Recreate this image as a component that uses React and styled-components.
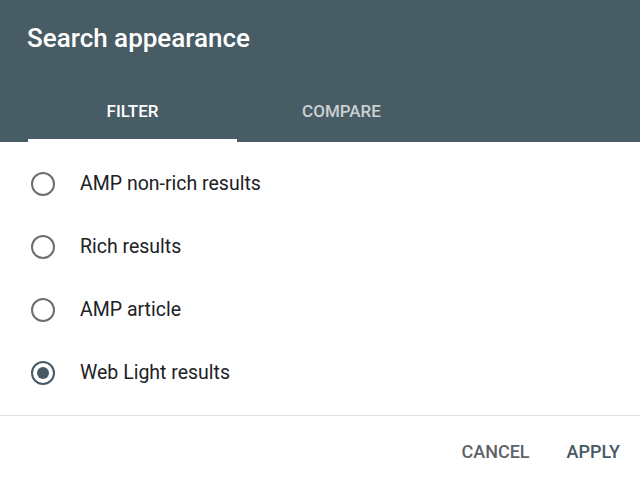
import React, { useState } from "react";
import styled, { createGlobalStyle } from "styled-components";

const Global = createGlobalStyle`
  html, body { margin: 0; padding: 0; background: #fff; }
  body { font-family: Roboto, "Noto Sans", Arial, sans-serif; }
  * { box-sizing: border-box; }
`;

const Dialog = styled.div`
  width: 640px;
  height: 477px;
  display: flex;
  flex-direction: column;
  background: #fff;
  overflow: hidden;
`;

const Header = styled.div`
  background: #485c65;
  height: 142px;
  display: flex;
  flex-direction: column;
  justify-content: space-between;
`;

const Title = styled.h1`
  margin: 0;
  padding: 23px 0 0 27px;
  font-size: 26px;
  font-weight: 500;
  color: #fff;
  line-height: 30px;
`;

const Tabs = styled.div`
  display: flex;
  padding-left: 28px;
`;

const Tab = styled.button`
  width: 209px;
  height: 64px;
  background: none;
  border: none;
  border-bottom: 3px solid ${(p) => (p.$active ? "#fff" : "transparent")};
  color: ${(p) => (p.$active ? "#fff" : "rgba(255,255,255,0.72)")};
  font-family: inherit;
  font-size: 17px;
  font-weight: 500;
  padding: 4px 0 0;
  cursor: pointer;
`;

const List = styled.div`
  padding: 10px 0 11px;
  border-bottom: 1px solid #e0e0e0;
`;

const Row = styled.label`
  height: 63px;
  display: flex;
  align-items: center;
  gap: 25px;
  padding-left: 31px;
  cursor: pointer;
`;

const Radio = styled.span`
  width: 24px;
  height: 24px;
  border-radius: 50%;
  border: 2px solid ${(p) => (p.$checked ? "#455a64" : "#6e6e6e")};
  display: flex;
  align-items: center;
  justify-content: center;
  &::after {
    content: "";
    width: 12px;
    height: 12px;
    border-radius: 50%;
    background: #455a64;
    display: ${(p) => (p.$checked ? "block" : "none")};
  }
`;

const Label = styled.span`
  font-size: 19.5px;
  color: #202124;
`;

const Footer = styled.div`
  flex: 1;
  display: flex;
  justify-content: flex-end;
  align-items: center;
  gap: 37px;
  padding: 9px 20px 0 0;
`;

const TextButton = styled.button`
  background: none;
  border: none;
  padding: 0;
  font-family: inherit;
  font-size: 18px;
  font-weight: 500;
  color: ${(p) => (p.$primary ? "#455a64" : "#5f6368")};
  cursor: pointer;
`;

const options = ["AMP non-rich results", "Rich results", "AMP article", "Web Light results"];

export default function App() {
  const [tab, setTab] = useState(0);
  const [sel, setSel] = useState(3);
  return (
    <>
      <Global />
      <Dialog>
        <Header>
          <Title>Search appearance</Title>
          <Tabs>
            <Tab $active={tab === 0} onClick={() => setTab(0)}>FILTER</Tab>
            <Tab $active={tab === 1} onClick={() => setTab(1)}>COMPARE</Tab>
          </Tabs>
        </Header>
        <List>
          {options.map((o, i) => (
            <Row key={o} onClick={() => setSel(i)}>
              <Radio $checked={sel === i} />
              <Label>{o}</Label>
            </Row>
          ))}
        </List>
        <Footer>
          <TextButton>CANCEL</TextButton>
          <TextButton $primary>APPLY</TextButton>
        </Footer>
      </Dialog>
    </>
  );
}
